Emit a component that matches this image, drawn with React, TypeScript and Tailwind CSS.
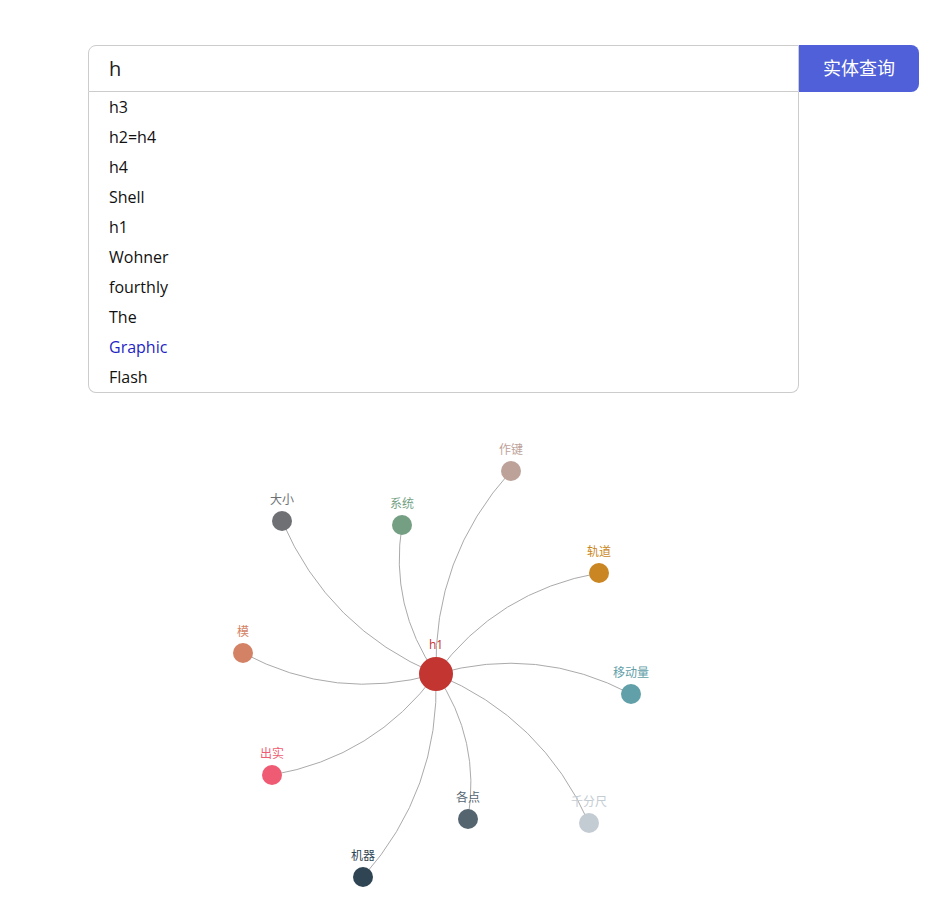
import React, { useState } from "react";

type GraphNode = {
  name: string;
  x: number;
  y: number;
  color: string;
};

const suggestions = [
  "h3",
  "h2=h4",
  "h4",
  "Shell",
  "h1",
  "Wohner",
  "fourthly",
  "The",
  "Graphic",
  "Flash",
];

const center = { name: "h1", x: 436, y: 673, color: "#c23531" };

const nodes: GraphNode[] = [
  { name: "作键", x: 511, y: 470, color: "#bda29a" },
  { name: "大小", x: 282, y: 520, color: "#6e7074" },
  { name: "系统", x: 402, y: 524, color: "#749f83" },
  { name: "轨道", x: 599, y: 572, color: "#ca8622" },
  { name: "模", x: 243, y: 652, color: "#d48265" },
  { name: "移动量", x: 631, y: 693, color: "#61a0a8" },
  { name: "出实", x: 272, y: 774, color: "#ef5b72" },
  { name: "各点", x: 468, y: 818, color: "#546570" },
  { name: "千分尺", x: 589, y: 822, color: "#c4ccd3" },
  { name: "机器", x: 363, y: 876, color: "#2f4554" },
];

// same curve as echarts' curveness option
const edgePath = (n: GraphNode) => {
  const c = 0.2;
  const dx = n.x - center.x;
  const dy = n.y - center.y;
  const cx = (center.x + n.x) / 2 + dy * c;
  const cy = (center.y + n.y) / 2 - dx * c;
  return `M${center.x} ${center.y} Q${cx} ${cy} ${n.x} ${n.y}`;
};

const font = '"Microsoft YaHei", "Open Sans", "Noto Sans CJK SC", sans-serif';

const App: React.FC = () => {
  const [query, setQuery] = useState("h");

  return (
    <div
      className="min-h-screen bg-white pt-[45px]"
      style={{ fontFamily: font }}
    >
      <div className="ml-[88px] flex w-[831px] items-start">
        <div className="w-[711px]">
          <input
            value={query}
            onChange={(e) => setQuery(e.target.value)}
            className="block h-[47px] w-full rounded-tl-[8px] border border-[#cccccc] px-5 text-[20px] text-[#222] outline-none"
          />
          <ul className="rounded-b-[8px] border-x border-b border-[#cccccc]">
            {suggestions.map((s) => (
              <li
                key={s}
                className={`flex h-[30px] items-center pl-5 text-[16px] ${
                  s === "Graphic" ? "text-[#1f1fc4]" : "text-[#111]"
                }`}
              >
                {s}
              </li>
            ))}
          </ul>
        </div>
        <button className="h-[47px] w-[120px] rounded-r-[8px] bg-[#4f60d9] text-[18px] text-white">
          实体查询
        </button>
      </div>

      <svg
        className="mt-[8px] block"
        width={941}
        height={504}
        viewBox="0 400 941 504"
        style={{ fontFamily: font }}
      >
        {nodes.map((n) => (
          <path
            key={n.name}
            d={edgePath(n)}
            fill="none"
            stroke="#aaaaaa"
            strokeWidth={1}
          />
        ))}
        {nodes.map((n) => (
          <g key={n.name}>
            <circle cx={n.x} cy={n.y} r={10} fill={n.color} />
            <text
              x={n.x}
              y={n.y - 17}
              textAnchor="middle"
              fontSize={12}
              fill={n.color}
            >
              {n.name}
            </text>
          </g>
        ))}
        <circle cx={center.x} cy={center.y} r={17} fill={center.color} />
        <text
          x={center.x}
          y={center.y - 25}
          textAnchor="middle"
          fontSize={12}
          fill={center.color}
        >
          {center.name}
        </text>
      </svg>
    </div>
  );
};

export default App;
